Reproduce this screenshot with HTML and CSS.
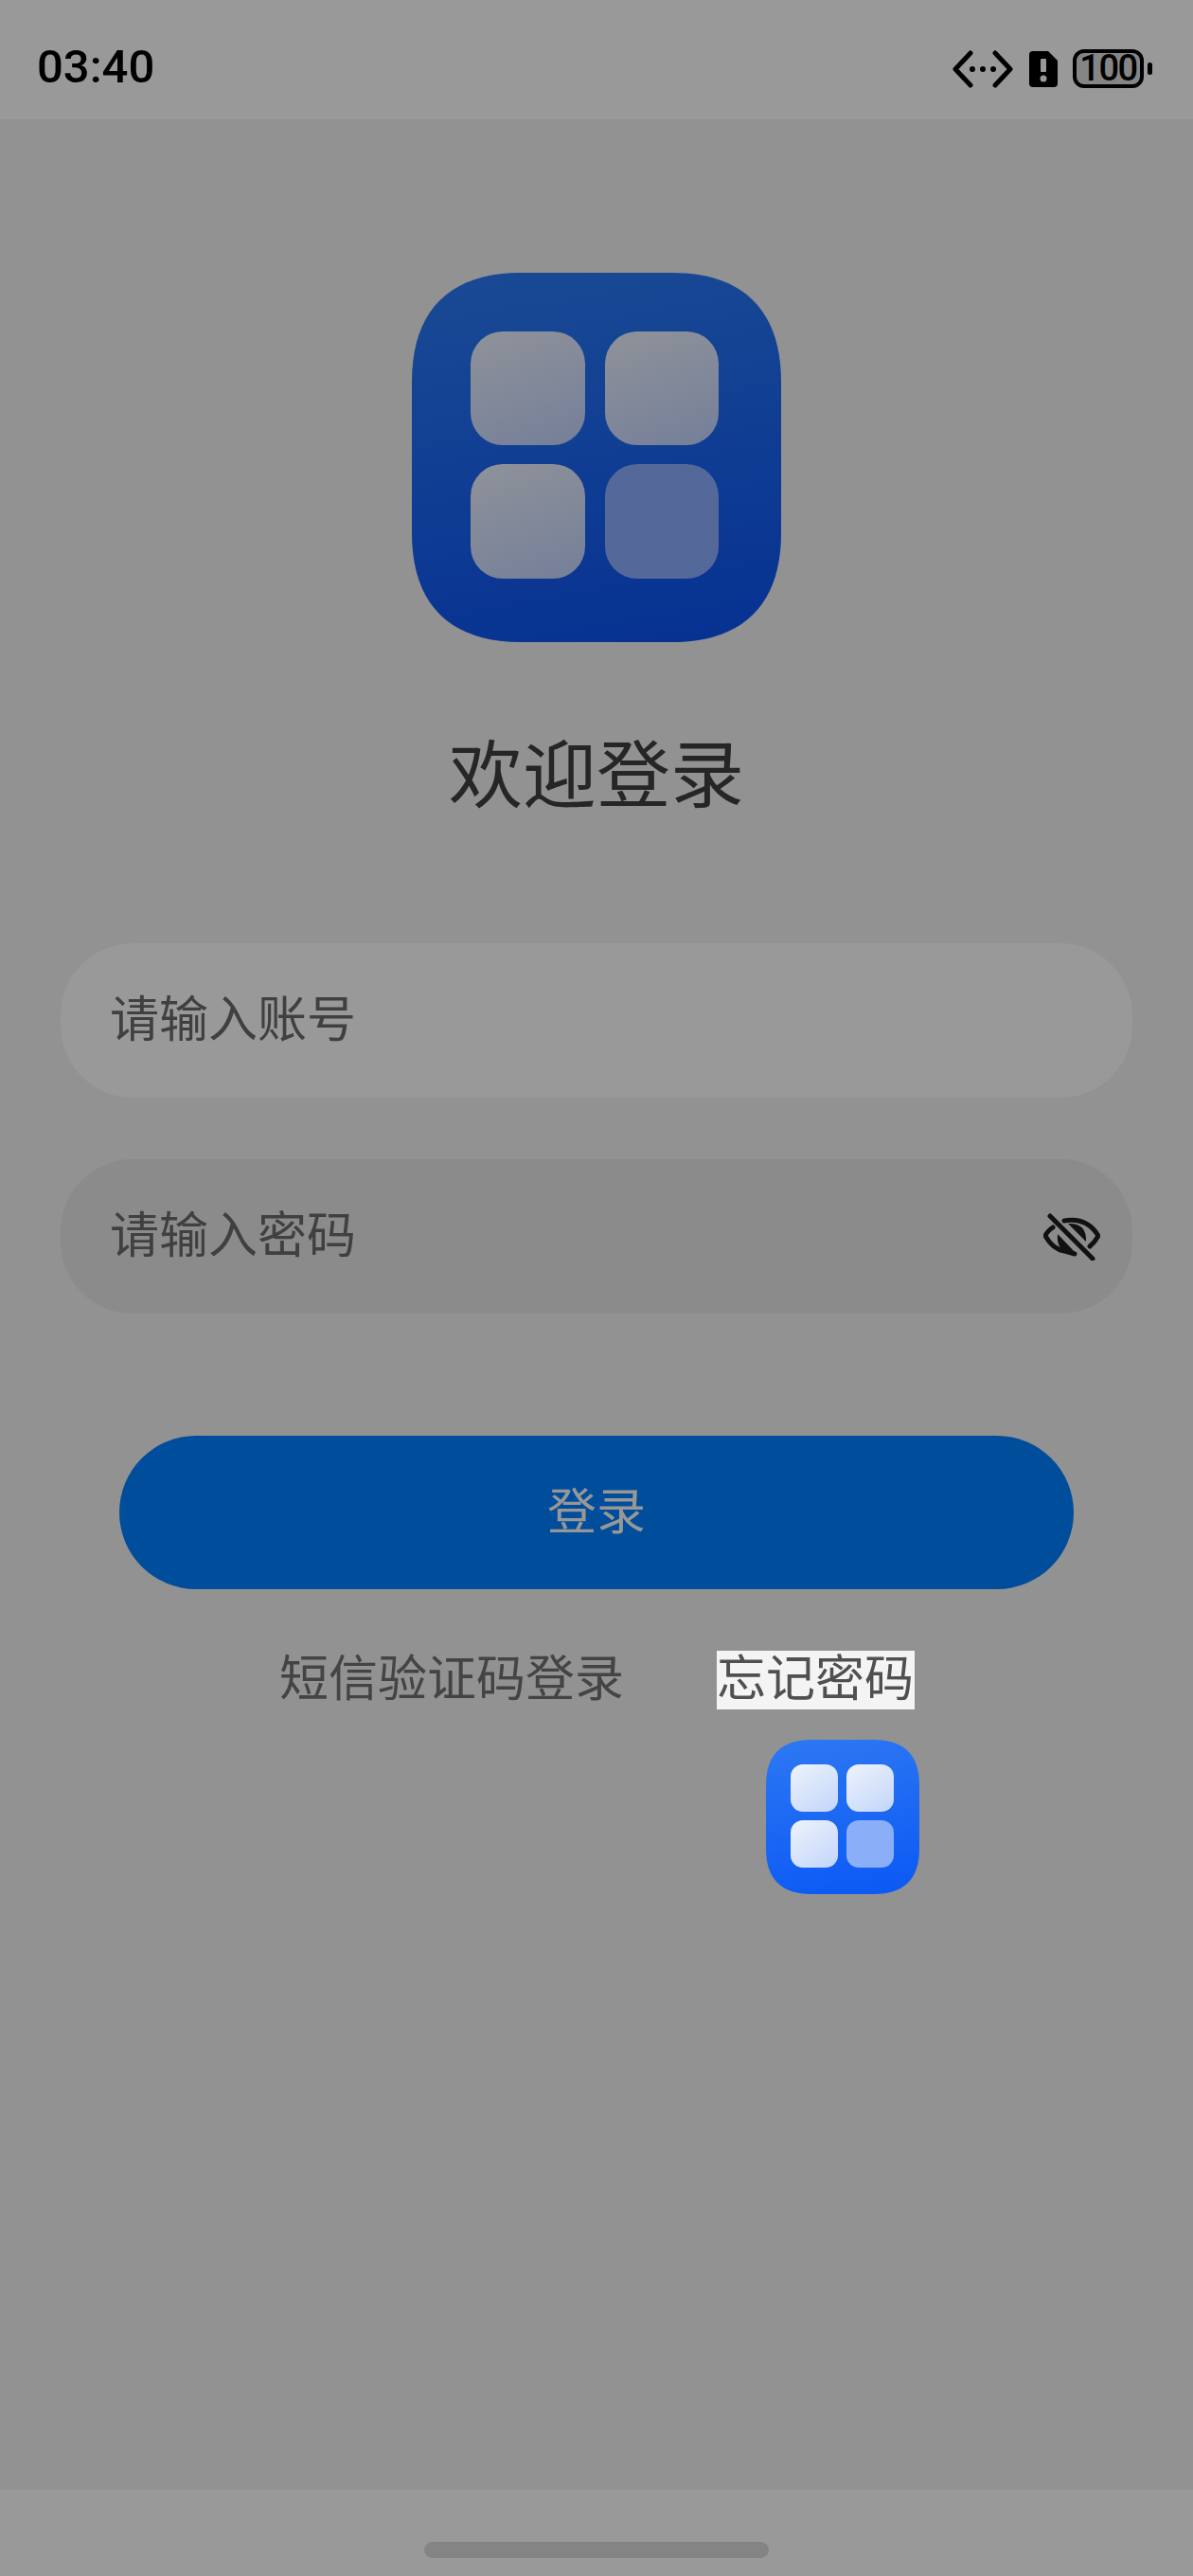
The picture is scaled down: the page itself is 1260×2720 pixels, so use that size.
FILE: index.html
```html
<!DOCTYPE html>
<html lang="zh-CN">

<head>
    <meta charset="UTF-8">
    <meta name="viewport" content="width=device-width, initial-scale=1.0">
    <title>欢迎登录</title>
    <link rel="stylesheet" href="styles.css">
</head>

<body>
    <div class="status-bar">
        <span class="time">03:40</span>
        <div class="status-icons">
            <svg class="icon-link" viewBox="0 0 64 40" width="64" height="40">
                <path d="M19 3 3 20l16 17M45 3l16 17-16 17" fill="none" stroke="#000" stroke-width="5" stroke-linecap="round" stroke-linejoin="round" />
                <circle cx="21" cy="20" r="3" />
                <circle cx="32" cy="20" r="3" />
                <circle cx="43" cy="20" r="3" />
            </svg>
            <svg class="icon-sim" viewBox="0 0 30 38" width="30" height="38">
                <path d="M4 0h16l10 10v24a4 4 0 0 1-4 4H4a4 4 0 0 1-4-4V4a4 4 0 0 1 4-4Z" />
                <rect x="12" y="8" width="6" height="14" rx="1" fill="#999" />
                <circle cx="15" cy="29" r="3.5" fill="#999" />
            </svg>
            <div class="battery">100</div>
            <div class="battery-nub"></div>
        </div>
    </div>

    <div class="main">
        <div class="logo">
            <div class="cell"></div>
            <div class="cell"></div>
            <div class="cell"></div>
            <div class="cell cell-last"></div>
        </div>

        <h1 class="title">欢迎登录</h1>

        <form class="login-form">
            <div class="field field-light">
                <span class="placeholder">请输入账号</span>
            </div>
            <div class="field field-dark">
                <span class="placeholder">请输入密码</span>
                <svg class="icon-eye" viewBox="0 0 60 50" width="60" height="50">
                    <g fill="none" stroke="#111" stroke-width="5" stroke-linecap="round">
                        <path d="M10 15Q4 19 2 24Q10 38 22 40Q28 42 33 43" />
                        <path d="M22 8Q46 4 58 24Q54 31 49 35" />
                        <path d="M7 3 52 48" />
                    </g>
                    <path d="M26 11Q46 10 45 30Z" fill="#111" />
                    <path d="M15 22Q13 43 35 43Z" fill="#111" />
                </svg>
            </div>
            <button class="login-btn" type="button">登录</button>
        </form>

        <div class="links">
            <span class="link">短信验证码登录</span>
            <span class="link link-active">忘记密码</span>
        </div>

        <div class="float-logo">
            <div class="cell-small"></div>
            <div class="cell-small"></div>
            <div class="cell-small"></div>
            <div class="cell-small cell-small-last"></div>
        </div>
    </div>

    <div class="nav-bar">
        <div class="home-handle"></div>
    </div>
</body>

</html>
```

FILE: styles.css
```css
* {
    box-sizing: border-box;
}

html,
body {
    margin: 0;
    height: 2720px;
}

body {
    display: flex;
    flex-direction: column;
    font-family: "Noto Sans CJK SC", "Noto Sans", sans-serif;
    background-color: #929292;
    overflow: hidden;
}

.status-bar {
    height: 126px;
    flex-shrink: 0;
    display: flex;
    justify-content: space-between;
    align-items: flex-start;
    padding: 43px 43px 0 39px;
    background-color: #999;
    color: #000;
}

.time {
    font-family: Roboto, sans-serif;
    font-size: 49px;
    font-weight: 500;
    line-height: 56px;
}

.status-icons {
    display: flex;
    align-items: center;
    padding-top: 9px;
}

.icon-sim {
    margin-left: 17px;
}

.battery {
    width: 75px;
    height: 41px;
    margin-left: 16px;
    border: 4px solid #000;
    border-radius: 12px;
    background-color: #858585;
    font-family: Roboto, sans-serif;
    font-size: 38px;
    font-weight: 500;
    line-height: 33px;
    letter-spacing: -1.5px;
    text-align: center;
    color: #000;
}

.battery-nub {
    width: 5px;
    height: 13px;
    margin-left: 4px;
    border-radius: 3px;
    background-color: #000;
}

.main {
    flex: 1;
    display: flex;
    flex-direction: column;
}

.logo {
    width: 390px;
    height: 390px;
    margin: 162px 0 0 435px;
    padding: 62px 66px 66px 62px;
    display: grid;
    grid-template-columns: 121px 120px;
    grid-template-rows: 120px 121px;
    column-gap: 21px;
    row-gap: 20px;
    clip-path: path("M0 115C0 40 40 0 115 0H275C350 0 390 40 390 115V275C390 350 350 390 275 390H115C40 390 0 350 0 275Z");
    background: linear-gradient(170deg, #1a4a94, #063192);
}

.cell {
    border-radius: 34px;
    background: linear-gradient(160deg, #8f9299, #747f99);
}

.cell-last {
    background: #54699a;
}

.title {
    margin: 80px 0 0;
    font-size: 78px;
    font-weight: 400;
    line-height: 110px;
    text-align: center;
    color: #262626;
}

.login-form {
    display: flex;
    flex-direction: column;
    margin: 128px 64px 0;
}

.field {
    height: 163px;
    display: flex;
    align-items: center;
    justify-content: space-between;
    padding: 0 34px 10px 52px;
    border-radius: 76px;
}

.field-light {
    background-color: #999;
}

.field-dark {
    margin-top: 65px;
    background-color: #8b8b8b;
}

.placeholder {
    font-size: 52px;
    line-height: 72px;
    color: #404040;
}

.icon-eye {
    margin-bottom: -10px;
}

.login-btn {
    width: 1008px;
    height: 162px;
    margin: 129px 0 0 62px;
    padding-bottom: 10px;
    border: none;
    border-radius: 81px;
    background-color: #004d9c;
    font-family: inherit;
    font-size: 52px;
    color: #979797;
}

.links {
    display: flex;
    justify-content: center;
    gap: 97px;
    margin-top: 65px;
}

.link {
    height: 62px;
    padding: 0 1px;
    font-size: 52px;
    line-height: 52px;
    color: #444;
}

.link-active {
    width: 209px;
    padding: 0;
    background-color: #f4f4f4;
    color: #505050;
}

.float-logo {
    width: 162px;
    height: 163px;
    margin: 32px 0 0 809px;
    padding: 26px 27px 28px 26px;
    display: grid;
    grid-template-columns: 50px 50px;
    grid-template-rows: 50px 50px;
    gap: 9px;
    clip-path: path("M0 48C0 16 16 0 48 0H114C146 0 162 16 162 48V115C162 147 146 163 114 163H48C16 163 0 147 0 115Z");
    background: linear-gradient(170deg, #2d78f2, #0b58f5);
}

.cell-small {
    border-radius: 13px;
    background: linear-gradient(145deg, #eef3fc, #c2d5fa);
}

.cell-small-last {
    background: #8aaef7;
}

.nav-bar {
    height: 91px;
    flex-shrink: 0;
    padding: 55px 0 0 448px;
    background-color: #999;
}

.home-handle {
    width: 364px;
    height: 17px;
    border-radius: 9px;
    background-color: #848484;
}
```
